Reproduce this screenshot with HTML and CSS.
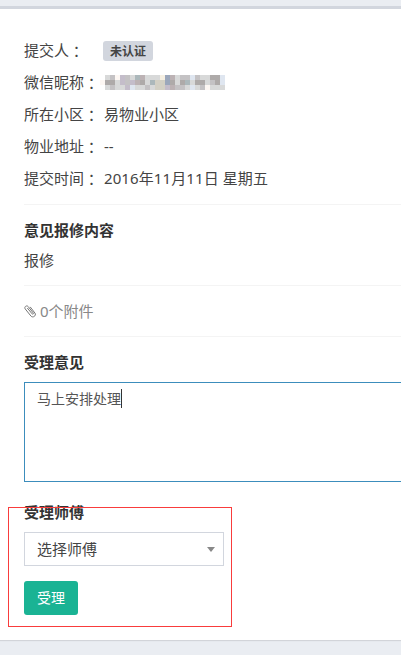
FILE: index.html
```
<!DOCTYPE html>
<html lang="zh-CN">
<head>
<meta charset="utf-8">
<title>意见报修</title>
<link rel="stylesheet" href="styles.css">
</head>
<body>

<div class="box">
    <ul class="info">
        <li><span class="name">提交人<span class="colon" lang="zh-TW">：</span></span><span class="label">未认证</span></li>
        <li><span class="name">微信昵称<span class="colon" lang="zh-TW">：</span></span>
            <svg class="mosaic" width="125" height="15" viewBox="0 0 25 3" shape-rendering="crispEdges">
                <path fill="#d8d9d9" d="M1 0h24v3H1z"/>
                <path fill="#fdf7f3" d="M0 1h1v1H0zM3 0h1v1H3zM21 2h1v1h-1z"/>
                <path fill="#c4c2c4" d="M2 0h1v1H2zM2 2h1v1H2zM4 0h2v1H4zM5 1h1v1H5zM9 2h1v1H9zM16 0h2v1h-2zM15 2h2v1h-2zM19 0h1v1h-1zM20 2h1v1h-1zM22 1h1v1h-1z"/>
                <path fill="#aeaaa9" d="M1 1h2v1H1zM8 1h1v1H8zM14 1h1v1h-1zM16 1h1v1h-1zM19 1h2v1h-2zM23 1h1v1h-1zM22 0h2v1h-2z"/>
                <path fill="#c4bdca" d="M4 0h1v2H4zM6 1h1v1H6zM5 2h1v1H5zM13 2h1v1h-1z"/>
                <path fill="#bcb2b4" d="M8 0h1v1H8zM14 0h1v1h-1zM14 2h1v1h-1zM7 1h1v1H7z"/>
                <path fill="#acb8bb" d="M7 0h1v1H7zM10 1h1v1h-1zM17 1h1v1h-1z"/>
                <path fill="#d3d0c4" d="M11 1h1v1h-1zM12 1h1v1h-1zM11 2h2v1h-2z"/>
                <path fill="#9ba7bb" d="M13 0h1v2h-1z"/>
                <path fill="#f5efe2" d="M12 0h1v1h-1z"/>
                <path fill="#dfe6f0" d="M24 0h1v2h-1zM18 0h1v1h-1zM18 2h1v1h-1zM6 2h1v1H6z"/>
            </svg>
        </li>
        <li><span class="name">所在小区<span class="colon" lang="zh-TW">：</span></span>易物业小区</li>
        <li><span class="name">物业地址<span class="colon" lang="zh-TW">：</span></span>--</li>
        <li><span class="name">提交时间<span class="colon" lang="zh-TW">：</span></span><span class="date">2016年11月11日 星期五</span></li>
    </ul>

    <div class="content">
        <h4>意见报修内容</h4>
        <p>报修</p>
    </div>

    <div class="attach">
        <svg width="12" height="14" viewBox="0 0 12 14" fill="none" stroke="#777" stroke-width="1">
            <path d="M3.300 4l4.900 5.900c.6.800 1.700-.1 1.100-.9L4.200 2.600C2.700.800-.2 2.900 1.200 4.900l5.700 7.100C8.800 14.400 12.800 11.500 10.900 9L6.200 2.900"/>
        </svg>
        0个附件
    </div>

    <form onsubmit="return false">
        <h4>受理意见</h4>
        <div class="textarea" contenteditable="true">马上安排处理<span class="caret"></span></div>

        <h4>受理师傅</h4>
        <div class="select">选择师傅<i class="arrow"></i></div>
        <button class="btn">受理</button>
    </form>

    <div class="mark"></div>
</div>

</body>
</html>
```
FILE: styles.css
```
* {
    box-sizing: border-box;
}
body {
    margin: 0;
    padding-top: 6px;
    height: 655px;
    overflow: hidden;
    background: #eaedf2;
    color: #444;
    font: 15px/32px "Noto Sans", "Noto Sans CJK SC", sans-serif;
}
.box {
    position: relative;
    height: 634px;
    padding: 25px 0 0 24px;
    border-top: 3px solid #d2d6de;
    background: #fff;
    box-shadow: 0 1px 1px rgba(0, 0, 0, 0.1);
}
.info {
    list-style: none;
    margin: 0;
    padding: 0 0 10px;
    border-bottom: 1px solid #f4f4f4;
}
.info li {
    display: flex;
    align-items: center;
    height: 32px;
}
.name {
    width: 80px;
    white-space: nowrap;
}
.colon {
    font-family: "Noto Sans CJK TC", sans-serif;
    line-height: 1;
    vertical-align: -1px;
}
.date {
    letter-spacing: 0.1px;
}
.label {
    width: 50px;
    height: 20px;
    margin: 1px 0 0 -1px;
    border-radius: 3px;
    background: #d2d6de;
    font-size: 12px;
    font-weight: 600;
    line-height: 21px;
    text-align: center;
}
.mosaic {
    margin: 1px 0 0 -4px;
}
h4 {
    margin: 0;
    color: #333;
    font-size: 15px;
    line-height: 20px;
}
.content {
    height: 81px;
    padding-top: 15px;
    border-bottom: 1px solid #f4f4f4;
}
.content p {
    margin: 10px 0 0;
    line-height: 20px;
}
.attach {
    display: flex;
    align-items: center;
    gap: 4px;
    height: 51px;
    border-bottom: 1px solid #f4f4f4;
    color: #888;
}
form {
    padding-top: 15px;
}
.textarea {
    height: 100px;
    margin: 10px -10px 20px 0;
    padding: 6px 12px;
    border: 1px solid #3c8dbc;
    color: #555;
    font-size: 14px;
    line-height: 20px;
}
.caret {
    display: inline-block;
    width: 1px;
    height: 19px;
    margin-top: -3px;
    background: #333;
    vertical-align: middle;
}
.select {
    display: flex;
    align-items: center;
    justify-content: space-between;
    width: 200px;
    height: 34px;
    margin: 10px 0 15px;
    padding: 0 8px 0 12px;
    border: 1px solid #d2d6de;
}
.arrow {
    border: 4px solid transparent;
    border-top: 5px solid #888;
    border-bottom: 0;
}
.btn {
    display: block;
    width: 54px;
    height: 34px;
    padding: 0;
    border: 0;
    border-radius: 3px;
    background: #1ab394;
    color: #fff;
    font: inherit;
    font-size: 14px;
}
/* red frame around the assign block */
.mark {
    position: absolute;
    top: 498px;
    left: 8px;
    width: 224px;
    height: 120px;
    border: 1px solid #f93c3c;
    pointer-events: none;
}
```
